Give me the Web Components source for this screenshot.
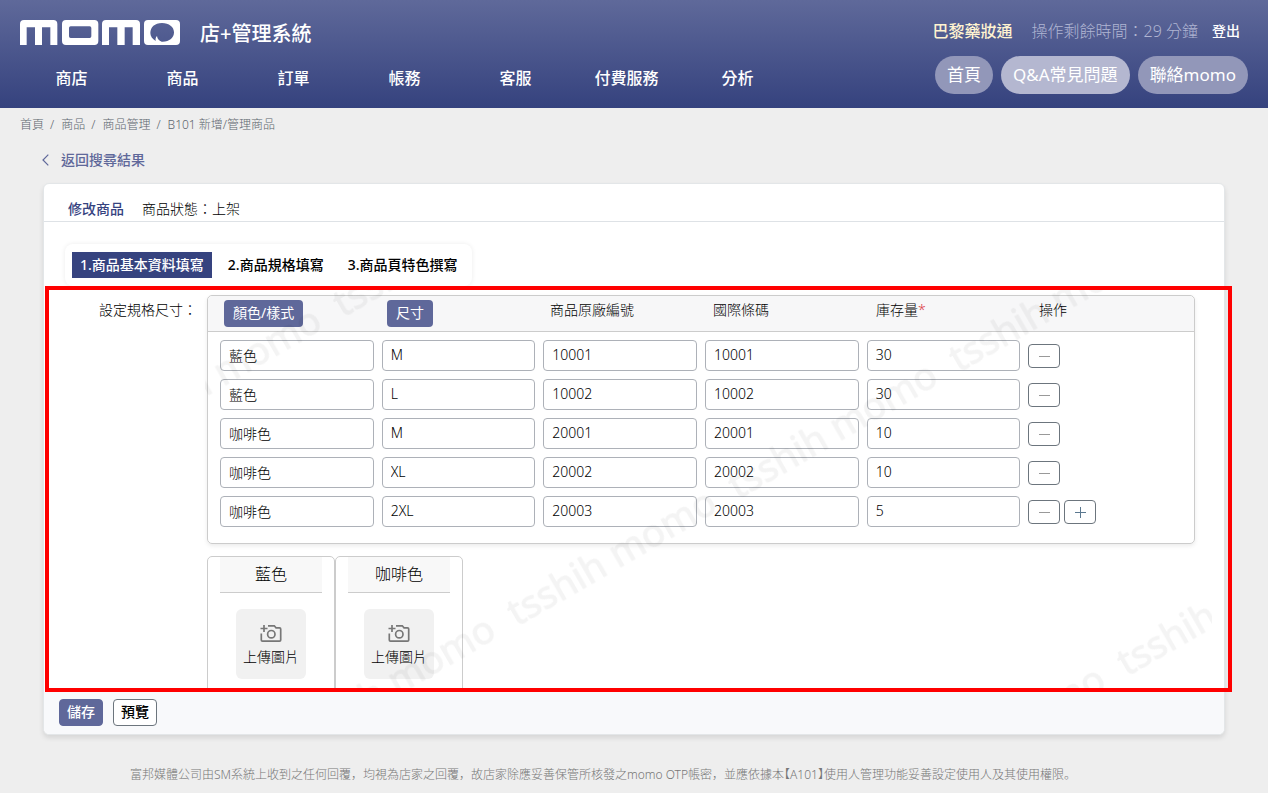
<!DOCTYPE html>
<html lang="zh-Hant">
<head>
<meta charset="utf-8">
<title>momo 店+管理系統</title>
<style>
  html { background: #eee; }
  body {
    margin: 0;
    font-family: "Noto Sans", "Noto Sans CJK TC", sans-serif;
    font-size: 14px;
    font-weight: 300;
    line-height: 21px;
    color: #000;
    --navy: #36437f;
    --indigo: #5f689a;
    --line: #ccc;
  }
</style>
</head>
<body>
<app-header></app-header>
<bread-crumb>
  <a href="#">首頁</a><a href="#">商品</a><a href="#">商品管理</a><a href="#">B101 新增/管理商品</a>
</bread-crumb>
<back-link>返回搜尋結果</back-link>
<product-card>
  <span slot="title">修改商品</span>
  <span slot="status">商品狀態：上架</span>
  <step-tabs></step-tabs>
  <spec-section>
    <span slot="label">設定規格尺寸：</span>
    <spec-table></spec-table>
    <color-card slot="colors">藍色</color-card>
    <color-card slot="colors">咖啡色</color-card>
  </spec-section>
  <tool-button slot="actions" primary>儲存</tool-button>
  <tool-button slot="actions">預覽</tool-button>
</product-card>
<app-footer lang="ja">富邦媒體公司由SM系統上收到之任何回覆，均視為店家之回覆，故店家除應妥善保管所核發之momo OTP帳密，並應依據本<span style="font-feature-settings:'halt'">【A101】</span>使用人管理功能妥善設定使用人及其使用權限。</app-footer>

<script>
const define = (name, html) => customElements.define(name, class extends HTMLElement {
  constructor() {
    super();
    this.attachShadow({ mode: 'open' }).innerHTML =
      `<style>*{box-sizing:border-box} a{color:inherit;text-decoration:none} button,input{font:inherit}</style>` + html;
  }
});

define('momo-logo', `
<style>:host{display:block} svg{display:block}</style>
<svg width="160" height="25" viewBox="0 0 480 75" role="img" aria-label="momo">
  <g fill="#fff" fill-rule="evenodd">
    <path d="M0 75V12Q0 0 12 0H100Q112 0 112 12V75H91V22H66V75H45V22H20V75Z"/>
    <path d="M138 0H223Q235 0 235 12V63Q235 75 223 75H138Q126 75 126 63V12Q126 0 138 0ZM152 19Q147 19 147 24V49Q147 54 152 54H209Q214 54 214 49V24Q214 19 209 19Z"/>
    <path d="M246 75V12Q246 0 258 0H348Q360 0 360 12V75H338V22H314V75H292V22H267V75Z"/>
    <path d="M384 0H468Q480 0 480 12V63Q480 75 468 75H384Q372 75 372 63V12Q372 0 384 0ZM426 9C404 9 391 22 391 39C391 49 397 57 407 63C406 57 407 51 411 48C412 56 417 63 425 65C448 66 462 54 462 37C462 21 447 9 426 9Z"/>
  </g>
</svg>`);

define('app-header', `
<style>
  :host{display:flex;justify-content:space-between;background:linear-gradient(#5f699a,#35427e);color:#fff}
  .left{padding:18px 0 18px 16px}
  .brand{display:flex;align-items:flex-start;gap:20px;margin-left:4px;height:32px;font-size:20px;line-height:32px;font-weight:500}
  momo-logo{margin-top:2px}
  nav{display:grid;grid-template-columns:repeat(7,111px);margin-top:16px;font-size:16px;line-height:24px;font-weight:500;text-align:center}
  .right{display:flex;flex-direction:column;align-items:flex-end;padding:19px 20px 14px 0}
  .user{display:flex;align-items:center;margin-right:8px;font-size:16px;line-height:24px}
  .shop{color:#fff3d0;font-weight:500;margin-right:19px}
  .time{color:#b0b5d2;margin-right:14px}
  .out{font-size:14px;font-weight:500}
  .pills{display:flex;gap:8px;margin-top:13px}
  .pills a{padding:0 12px;border-radius:19px;background:#9297b9;font-size:17px;font-weight:400;line-height:38px}
  .pills .hot{background:#b4b7d0}
</style>
<div class="left">
  <div class="brand"><momo-logo></momo-logo><span>店+管理系統</span></div>
  <nav><a href="#">商店</a><a href="#">商品</a><a href="#">訂單</a><a href="#">帳務</a><a href="#">客服</a><a href="#">付費服務</a><a href="#">分析</a></nav>
</div>
<div class="right">
  <div class="user"><span class="shop">巴黎藥妝通</span><span class="time">操作剩餘時間：29 分鐘</span><a class="out" href="#">登出</a></div>
  <div class="pills"><a href="#">首頁</a><a class="hot" href="#">Q&amp;A常見問題</a><a href="#">聯絡momo</a></div>
</div>`);

define('bread-crumb', `
<style>
  :host{display:flex;padding:9px 20px 0;font-size:12px;line-height:16px;color:#5c656d}
  ::slotted(a){color:inherit;text-decoration:none}
  ::slotted(a:not(:first-child))::before{content:"/";margin:0 7px 0 6px}
</style><slot></slot>`);

define('back-link', `
<style>
  :host{display:block;padding:17px 42px 12px;color:var(--indigo);font-weight:500;line-height:20px}
  a{display:inline-flex;align-items:center;gap:12px}
  svg{display:block}
</style>
<a href="#"><svg width="7" height="12" viewBox="0 0 7 12" fill="none" stroke="currentColor" stroke-width="1.2"><path d="M6.3.7 1 6l5.3 5.3"/></svg><slot></slot></a>`);

define('product-card', `
<style>
  :host{display:block;margin:0 43px;background:#fff;border:1px solid #e3e6e8;border-radius:6px;box-shadow:0 3px 5px rgba(0,0,0,.1)}
  header{display:flex;gap:18px;padding:14px 24px 2px;border-bottom:1px solid #dee2e6}
  .title{color:var(--navy);font-weight:500}
  footer{display:flex;gap:10px;padding:7px 15px 8px;background:#f8f9fb;border-radius:0 0 6px 6px}
</style>
<header><span class="title"><slot name="title"></slot></span><slot name="status"></slot></header>
<slot></slot>
<footer><slot name="actions"></slot></footer>`);

define('step-tabs', `
<style>
  :host{display:flex;padding:22px 21px 0}
  div{display:flex;gap:8px;padding:8px 7px;border-radius:8px;box-shadow:0 0 5px rgba(0,0,0,.08)}
  button{border:0;background:none;padding:0 8px;line-height:26px;font-weight:500;color:#000}
  [aria-selected=true]{background:var(--navy);color:#fff}
</style>
<div role="tablist">
  <button role="tab" aria-selected="true">1.商品基本資料填寫</button>
  <button role="tab" aria-selected="false">2.商品規格填寫</button>
  <button role="tab" aria-selected="false">3.商品頁特色撰寫</button>
</div>`);

/* Watermark: the same two words repeated along 30-degree lines. */
const marks = [[-83, 155, 2], [91, 464, 4], [701, 514, 2]].flatMap(([x, y, n]) =>
  Array.from({ length: n }, (_, i) =>
    `<text transform="translate(${x + 221 * i} ${y - 127 * i}) rotate(-30)">tsshih momo</text>`)).join('');

define('spec-section', `
<style>
  :host{display:block;position:relative;padding:4px 0}
  .view{position:relative;display:grid;grid-template-columns:153px 1fr;column-gap:10px;max-height:398px;overflow:hidden;padding:5px 29px 0 0}
  .label{padding-top:4px;text-align:right}
  .colors{display:flex;margin-top:12px}
  .mark{position:absolute;left:161px;right:12px;top:0;bottom:0;overflow:hidden;pointer-events:none}
  svg{display:block;overflow:visible}
  g{opacity:.045;fill:#000;stroke:#000;stroke-width:1}
  text{font-size:38px;font-weight:400}
  .frame{position:absolute;inset:0 -8px 0 1px;border:4px solid #f00;pointer-events:none}
</style>
<div class="view">
  <div class="label"><slot name="label"></slot></div>
  <div><slot></slot><div class="colors"><slot name="colors"></slot></div></div>
  <div class="mark" aria-hidden="true"><svg width="1007" height="398"><g>${marks}</g></svg></div>
</div>
<div class="frame"></div>`);

const rows = [
  ['藍色', 'M', '10001', '10001', '30'],
  ['藍色', 'L', '10002', '10002', '30'],
  ['咖啡色', 'M', '20001', '20001', '10'],
  ['咖啡色', 'XL', '20002', '20002', '10'],
  ['咖啡色', '2XL', '20003', '20003', '5'],
];
const fields = ['顏色/樣式', '尺寸', '商品原廠編號', '國際條碼', '庫存量'];
const minus = `<button class="op" aria-label="刪除"><svg width="11" height="11"><path d="M0 5.5H11"/></svg></button>`;
const plus = `<button class="op add" aria-label="新增"><svg width="11" height="11"><path d="M0 5.5H11M5.5 0V11"/></svg></button>`;

define('spec-table', `
<style>
  :host{display:block}
  table{display:block;border:1px solid var(--line);border-radius:5px;box-shadow:0 2px 4px rgba(0,0,0,.08)}
  thead,tbody{display:block}
  tr{display:grid;grid-template-columns:repeat(6,1fr)}
  thead tr{padding:4px;background:#f7f7f8;border-bottom:1px solid var(--line);border-radius:5px 5px 0 0}
  th{padding:0 12px;text-align:left;font-weight:300;line-height:20px}
  th button{display:block;border:0;border-radius:4px;padding:0 9px 2px;background:var(--indigo);color:#fff;font-weight:400;line-height:25px}
  i{font-style:normal;color:#dc3545}
  tbody{padding:8px 8px 16px}
  tbody tr+tr{margin-top:8px}
  td{display:flex;gap:4px;align-items:center;padding:0 4px}
  input{width:100%;height:31px;border:1px solid #adb1b8;border-radius:4px;padding:0 8px 2px;background:#fff;color:#000}
  .op{display:grid;place-items:center;width:32px;height:24px;padding:0;border:1px solid #6c757d;border-radius:4px;background:#fff;margin-top:1px}
  svg{display:block;stroke:#999;stroke-width:1}
  .add svg{stroke:#5b7890}
</style>
<table>
  <thead><tr>
    <th><button>顏色/樣式</button></th><th><button>尺寸</button></th>
    <th>商品原廠編號</th><th>國際條碼</th><th>庫存量<i>*</i></th><th>操作</th>
  </tr></thead>
  <tbody>${rows.map((r, n) => `<tr>${r.map((v, i) =>
    `<td><input aria-label="${fields[i]}" value="${v}"></td>`).join('')}<td>${minus}${n === rows.length - 1 ? plus : ''}</td></tr>`).join('')}</tbody>
</table>`);

define('color-card', `
<style>
  :host{display:block;width:128px;height:164px;padding:0 12px;border:1px solid var(--line);border-radius:5px;box-sizing:border-box}
  .name{height:36px;background:#f8f8f8;border-bottom:1px solid var(--line);text-align:center;font-size:16px;line-height:34px}
  button{display:flex;flex-direction:column;align-items:center;width:70px;height:70px;margin:16px auto 0;padding:15px 0 0;border:0;border-radius:6px;background:#f1f1f1;color:#000}
  svg{display:block;margin-bottom:3px}
</style>
<div class="name"><slot></slot></div>
<button>
  <svg width="22" height="19" viewBox="0 0 22 19" fill="none" stroke="#777" stroke-width="1.7">
    <path d="M4 1V8M.5 4.5H7.500M1.300 9.500V16Q1.300 17.200 2.500 17.200H19.500Q20.700 17.200 20.700 16V5Q20.700 3.800 19.500 3.800H16L14.300 1.800H8"/>
    <circle cx="11.300" cy="10.200" r="3.700"/>
  </svg>
  <span>上傳圖片</span>
</button>`);

define('tool-button', `
<style>
  :host{display:block}
  button{display:block;height:27px;padding:0 7px 2px;border:1px solid #6c757d;border-radius:4px;background:#fff;color:#000;font-weight:500;line-height:23px}
  :host([primary]) button{background:var(--indigo);border-color:var(--indigo);color:#fff}
</style><button><slot></slot></button>`);

define('app-footer', `
<style>:host{display:block;padding:31px 130px 0;font-family:"Noto Sans","Noto Sans CJK JP",sans-serif;font-size:12px;line-height:18px;color:#777}</style><slot></slot>`);
</script>
</body>
</html>
